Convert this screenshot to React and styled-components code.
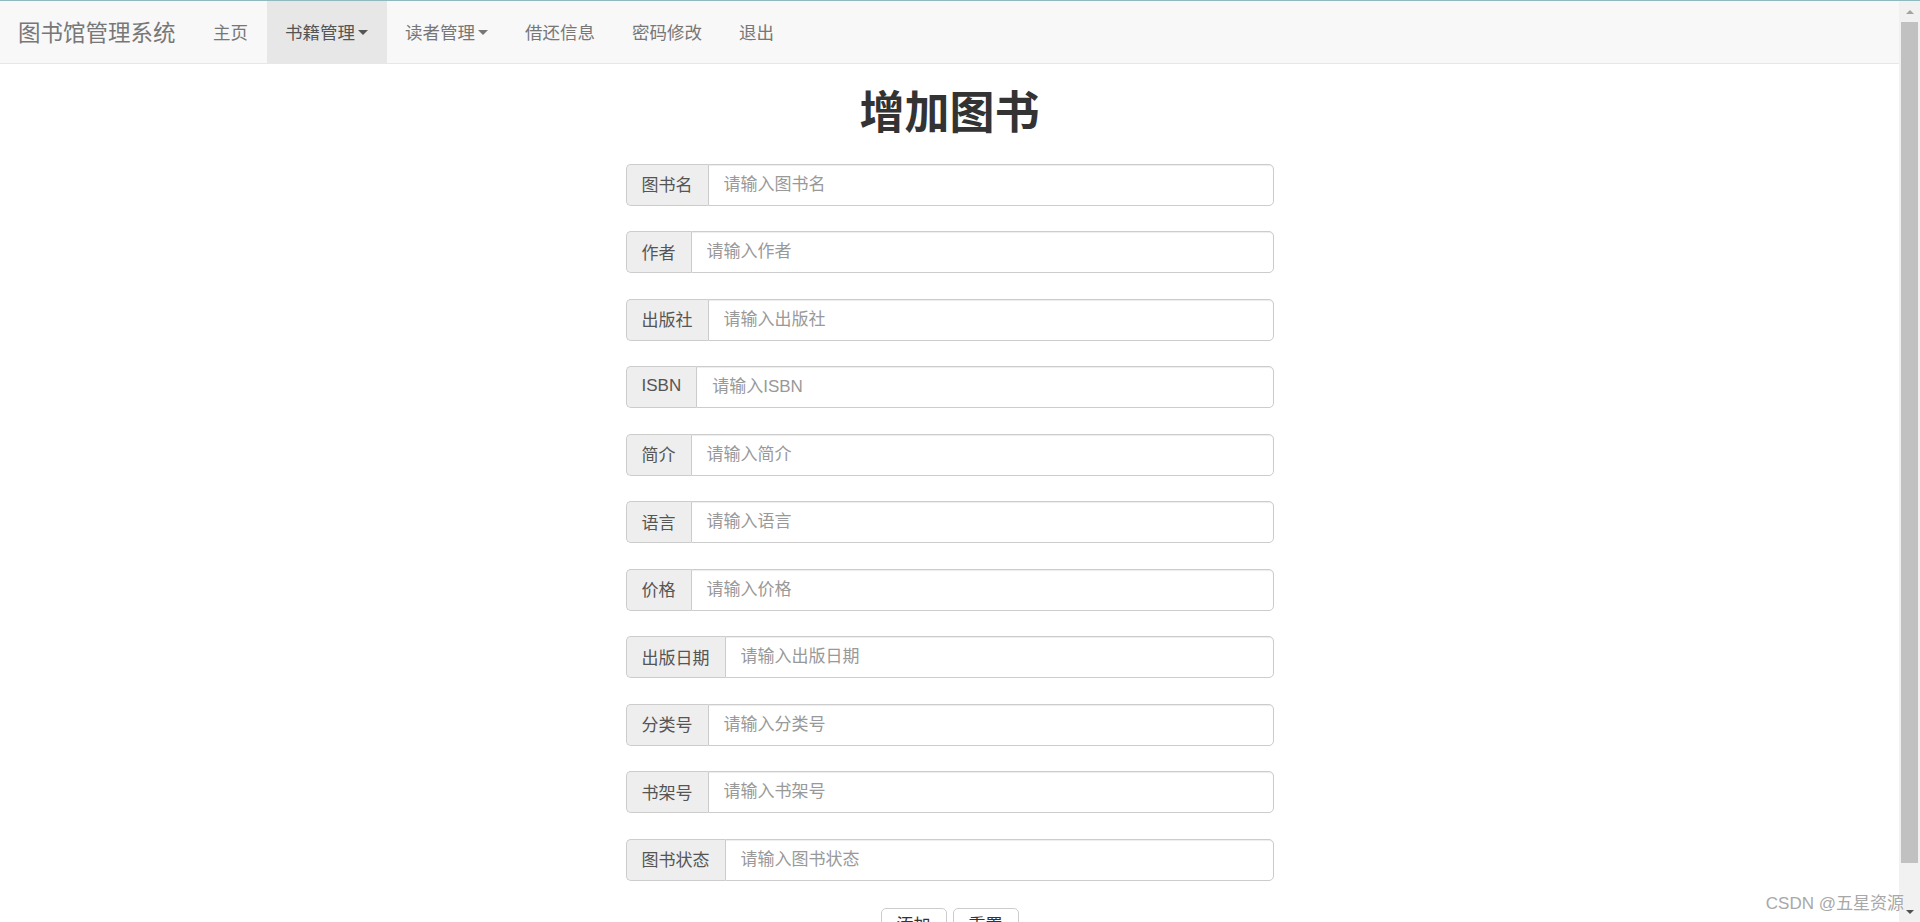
import React from "react";
import styled, { createGlobalStyle } from "styled-components";

const GlobalStyle = createGlobalStyle`
  html, body {
    margin: 0;
    padding: 0;
    height: 100%;
    overflow: hidden;
    background: #fff;
  }
  body {
    font-family: "Liberation Sans", "Noto Sans CJK SC", sans-serif;
    color: #333;
  }
  * {
    box-sizing: border-box;
  }
`;

const Frame = styled.div`
  height: 922px;
  display: flex;
  flex-direction: column;
  border-top: 1px solid #8fb8bf;
`;

const Body = styled.div`
  flex: 1;
  display: flex;
  min-height: 0;
`;

const Main = styled.div`
  flex: 1;
  display: flex;
  flex-direction: column;
  overflow: hidden;
`;

const Navbar = styled.nav`
  height: 63px;
  flex-shrink: 0;
  display: flex;
  align-items: stretch;
  background: #f8f8f8;
  border-bottom: 1px solid #e7e7e7;
`;

const Brand = styled.a`
  display: flex;
  align-items: center;
  padding: 0 19px 2px 18px;
  font-size: 22.5px;
  color: #777;
  text-decoration: none;
  cursor: pointer;
`;

const NavItem = styled.a`
  display: flex;
  align-items: center;
  padding: 0 18.5px 2px;
  font-size: 17.5px;
  color: ${(p) => (p.$active ? "#555" : "#777")};
  background: ${(p) => (p.$active ? "#e7e7e7" : "transparent")};
  text-decoration: none;
  cursor: pointer;
`;

const Caret = styled.span`
  display: inline-block;
  width: 0;
  height: 0;
  margin: 2px 0 0 3px;
  border-top: 5px solid currentColor;
  border-left: 5px solid transparent;
  border-right: 5px solid transparent;
`;

const Content = styled.div`
  display: flex;
  flex-direction: column;
  align-items: center;
`;

const Title = styled.h1`
  margin: 26px 0 0;
  font-size: 45px;
  line-height: 48px;
  font-weight: 700;
  color: #333;
`;

const Form = styled.form`
  width: 648px;
  margin-top: 25.5px;
  display: flex;
  flex-direction: column;
  gap: 25.5px;
`;

const InputGroup = styled.div`
  display: flex;
  height: 42px;
  font-size: 17px;
`;

const Addon = styled.span`
  display: flex;
  align-items: center;
  padding: 0 15px 2px;
  background: #eee;
  color: #555;
  border: 1px solid #ccc;
  border-right: 0;
  border-radius: 5px 0 0 5px;
  white-space: nowrap;
`;

const Input = styled.input`
  flex: 1;
  min-width: 0;
  height: 100%;
  padding: 0 15px;
  font: inherit;
  color: #555;
  border: 1px solid #ccc;
  border-radius: 0 5px 5px 0;
  box-shadow: inset 0 1px 1px rgba(0, 0, 0, 0.075);
  outline: none;

  &::placeholder {
    color: #999;
  }
`;

const Actions = styled.div`
  display: flex;
  gap: 6px;
  margin-top: 27px;
`;

const Button = styled.button`
  padding: 5px 15px 11px;
  font: inherit;
  font-size: 17px;
  line-height: 24px;
  color: #333;
  background: #fff;
  border: 1px solid #ccc;
  border-radius: 5px;
  cursor: pointer;
`;

const Scrollbar = styled.div`
  width: 21px;
  flex-shrink: 0;
  display: flex;
  flex-direction: column;
  align-items: center;
  background: #f1f1f1;
`;

const Arrow = styled.div`
  height: 21px;
  flex-shrink: 0;
  display: flex;
  align-items: center;
  justify-content: center;

  &::after {
    content: "";
    width: 0;
    height: 0;
    border-left: 4px solid transparent;
    border-right: 4px solid transparent;
    ${(p) =>
      p.$down
        ? `border-top: 4px solid ${p.$color};`
        : `border-bottom: 4px solid ${p.$color};`}
  }
`;

const Thumb = styled.div`
  width: 17px;
  height: 841px;
  background: #c1c1c1;
`;

const Spacer = styled.div`
  flex: 1;
`;

const Watermark = styled.div`
  position: absolute;
  right: 16px;
  bottom: 8px;
  font-size: 17px;
  color: #a8a8a8;
  text-shadow: 0 0 2px #fff;
  pointer-events: none;
`;

const Page = styled.div`
  position: relative;
`;

const fields = [
  "图书名",
  "作者",
  "出版社",
  "ISBN",
  "简介",
  "语言",
  "价格",
  "出版日期",
  "分类号",
  "书架号",
  "图书状态",
];

const navItems = [
  { label: "主页" },
  { label: "书籍管理", caret: true, active: true },
  { label: "读者管理", caret: true },
  { label: "借还信息" },
  { label: "密码修改" },
  { label: "退出" },
];

const App = () => {
  return (
    <Page>
      <GlobalStyle />
      <Frame>
        <Body>
          <Main>
            <Navbar>
              <Brand>图书馆管理系统</Brand>
              {navItems.map((item) => (
                <NavItem key={item.label} $active={item.active}>
                  {item.label}
                  {item.caret && <Caret />}
                </NavItem>
              ))}
            </Navbar>
            <Content>
              <Title>增加图书</Title>
              <Form onSubmit={(e) => e.preventDefault()}>
                {fields.map((name) => (
                  <InputGroup key={name}>
                    <Addon>{name}</Addon>
                    <Input placeholder={`请输入${name}`} />
                  </InputGroup>
                ))}
              </Form>
              <Actions>
                <Button type="button">添加</Button>
                <Button type="button">重置</Button>
              </Actions>
            </Content>
          </Main>
          <Scrollbar>
            <Arrow $color="#a3a3a3" />
            <Thumb />
            <Spacer />
            <Arrow $down $color="#505050" />
          </Scrollbar>
        </Body>
      </Frame>
      <Watermark>CSDN @五星资源</Watermark>
    </Page>
  );
};

export default App;
